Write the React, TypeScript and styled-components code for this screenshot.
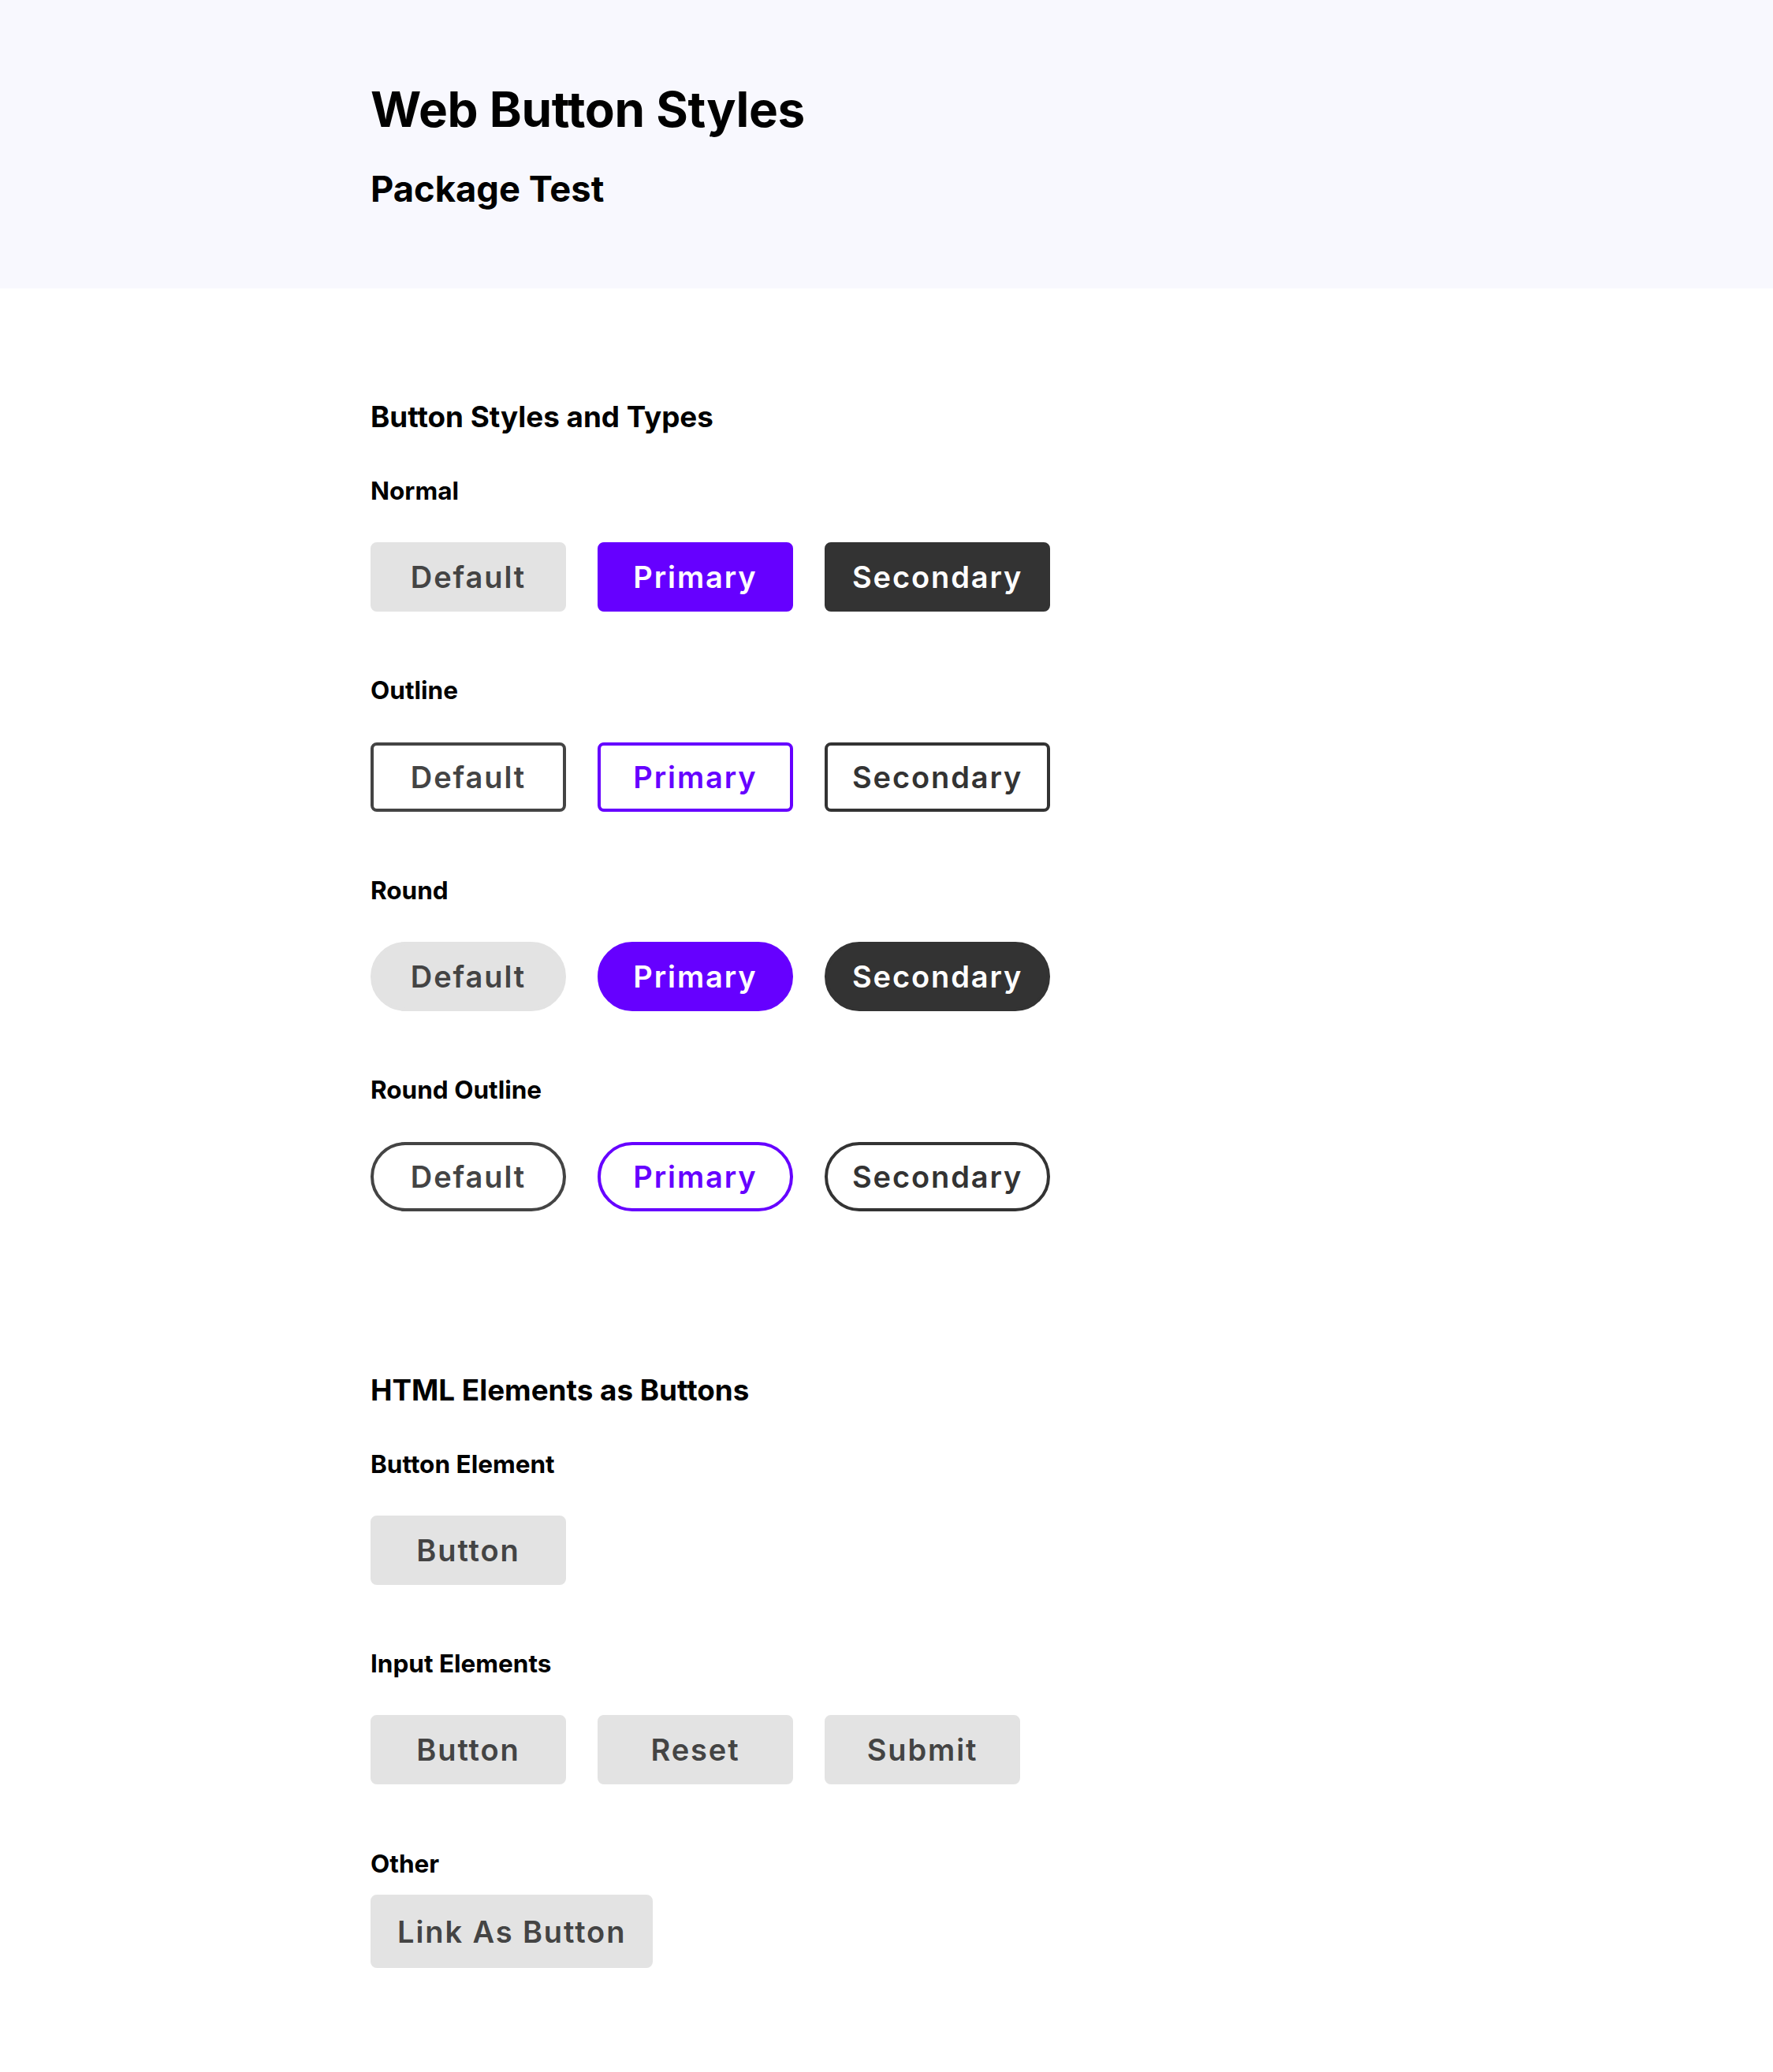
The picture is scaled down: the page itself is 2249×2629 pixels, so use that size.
import React from "react";
import styled, { createGlobalStyle, css } from "styled-components";

const GlobalStyle = createGlobalStyle`
  * { box-sizing: border-box; }
  html, body { margin: 0; padding: 0; background: #ffffff; }
  body {
    font-family: Inter, "Noto Sans", "Liberation Sans", sans-serif;
    color: #000000;
  }
`;

type Variant = "default" | "primary" | "secondary";

const palette: Record<Variant, { bg: string; fg: string; line: string }> = {
  default: { bg: "#e3e3e3", fg: "#444444", line: "#444444" },
  primary: { bg: "#6600ff", fg: "#ffffff", line: "#6600ff" },
  secondary: { bg: "#333333", fg: "#ffffff", line: "#333333" },
};

interface BtnProps {
  $variant?: Variant;
  $outline?: boolean;
  $round?: boolean;
}

const buttonBase = css<BtnProps>`
  display: inline-flex;
  align-items: center;
  justify-content: center;
  height: 88px;
  min-width: 248px;
  padding: 0 31px;
  margin: 0;
  font-family: Inter, "Noto Sans", "Liberation Sans", sans-serif;
  font-size: 38px;
  font-weight: 600;
  letter-spacing: 1.9px;
  line-height: 1;
  text-decoration: none;
  cursor: pointer;
  border-style: solid;
  border-width: 4px;
  border-radius: ${(p) => (p.$round ? "60px" : "8px")};
  ${(p) => {
    const c = palette[p.$variant ?? "default"];
    if (p.$outline) {
      return css`
        background: #ffffff;
        color: ${c.line};
        border-color: ${c.line};
      `;
    }
    return css`
      background: ${c.bg};
      color: ${c.fg};
      border-color: ${c.bg};
    `;
  }}
`;

const Button = styled.button<BtnProps>`
  ${buttonBase}
`;

const InputButton = styled.input<BtnProps>`
  ${buttonBase}
  -webkit-appearance: none;
  appearance: none;
`;

const LinkButton = styled.a<BtnProps>`
  ${buttonBase}
  height: 93.5px;
  padding: 0 30px;
`;

const Header = styled.header`
  background: #f8f8fe;
  padding: 108px 470px 104px;
`;

const Title = styled.h1`
  margin: 0;
  font-size: 62px;
  letter-spacing: -0.3px;
  line-height: 1;
  font-weight: 700;
`;

const Subtitle = styled.h2`
  margin: 46.5px 0 0;
  font-size: 45.3px;
  line-height: 1;
  font-weight: 700;
`;

const Main = styled.main`
  padding: 145px 470px 120px;
`;

const Section = styled.section`
  & + & {
    margin-top: 209px;
  }
`;

const SectionTitle = styled.h3`
  margin: 0;
  font-size: 36.8px;
  line-height: 1;
  font-weight: 700;
`;

const Group = styled.div`
  margin-top: 59.4px;
  & + & {
    margin-top: 84.4px;
  }
`;

const Label = styled.h4`
  margin: 0;
  font-size: 31.5px;
  line-height: 1;
  font-weight: 700;
`;

const Row = styled.div<{ $tight?: boolean }>`
  display: flex;
  gap: 40px;
  margin-top: ${(p) => (p.$tight ? "23.6px" : "49.6px")};
`;

const variants: Variant[] = ["default", "primary", "secondary"];
const names: Record<Variant, string> = {
  default: "Default",
  primary: "Primary",
  secondary: "Secondary",
};

const styleGroups: { label: string; outline?: boolean; round?: boolean }[] = [
  { label: "Normal" },
  { label: "Outline", outline: true },
  { label: "Round", round: true },
  { label: "Round Outline", outline: true, round: true },
];

export default function App() {
  return (
    <>
      <GlobalStyle />
      <Header>
        <Title>Web Button Styles</Title>
        <Subtitle>Package Test</Subtitle>
      </Header>
      <Main>
        <Section>
          <SectionTitle>Button Styles and Types</SectionTitle>
          {styleGroups.map((g) => (
            <Group key={g.label}>
              <Label>{g.label}</Label>
              <Row>
                {variants.map((v) => (
                  <Button
                    key={v}
                    type="button"
                    $variant={v}
                    $outline={g.outline}
                    $round={g.round}
                  >
                    {names[v]}
                  </Button>
                ))}
              </Row>
            </Group>
          ))}
        </Section>
        <Section>
          <SectionTitle>HTML Elements as Buttons</SectionTitle>
          <Group>
            <Label>Button Element</Label>
            <Row>
              <Button type="button">Button</Button>
            </Row>
          </Group>
          <Group>
            <Label>Input Elements</Label>
            <Row>
              <InputButton type="button" value="Button" />
              <InputButton type="reset" value="Reset" />
              <InputButton type="submit" value="Submit" />
            </Row>
          </Group>
          <Group>
            <Label>Other</Label>
            <Row $tight>
              <LinkButton href="#">Link As Button</LinkButton>
            </Row>
          </Group>
        </Section>
      </Main>
    </>
  );
}
